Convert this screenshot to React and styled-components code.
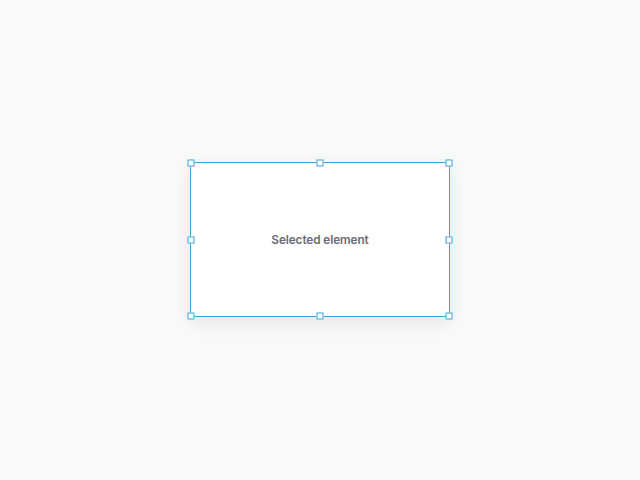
import React from "react";
import styled, { createGlobalStyle } from "styled-components";

const GlobalStyle = createGlobalStyle`
    html, body {
        margin: 0;
        padding: 0;
        background: #f9f9fa;
        font-family: Inter, "Noto Sans", sans-serif;
    }
`;

const handles = [
    ["0%", "0%"],
    ["50%", "0%"],
    ["100%", "0%"],
    ["0%", "50%"],
    ["100%", "50%"],
    ["0%", "100%"],
    ["50%", "100%"],
    ["100%", "100%"],
];

const App = () => {
    return (
        <>
            <GlobalStyle />
            <Stage>
                <Selection>
                    <Label>Selected element</Label>
                    {handles.map(([x, y], index) => (
                        <Handle key={`handle-${index}`} $x={x} $y={y} />
                    ))}
                </Selection>
            </Stage>
        </>
    );
};

export default App;

const Stage = styled.div`
    width: 640px;
    height: 480px;
    display: flex;
    justify-content: center;
    align-items: center;
`;

const Selection = styled.div`
    position: relative;
    box-sizing: border-box;
    width: 260px;
    height: 155px;
    margin-top: -1px;
    background: #ffffff;
    border: 1.5px solid #3ca2d8;
    box-shadow: 0 6px 16px rgba(20, 20, 40, 0.08);
    display: flex;
    justify-content: center;
    align-items: center;
`;

const Label = styled.span`
    font-size: 11.8px;
    font-weight: 600;
    color: #6b6c75;
    letter-spacing: -0.1px;
`;

const Handle = styled.span`
    position: absolute;
    left: ${(p) => p.$x};
    top: ${(p) => p.$y};
    width: 7px;
    height: 7px;
    box-sizing: border-box;
    background: #ffffff;
    border: 1.5px solid #3ca2d8;
    transform: translate(-50%, -50%);
`;
